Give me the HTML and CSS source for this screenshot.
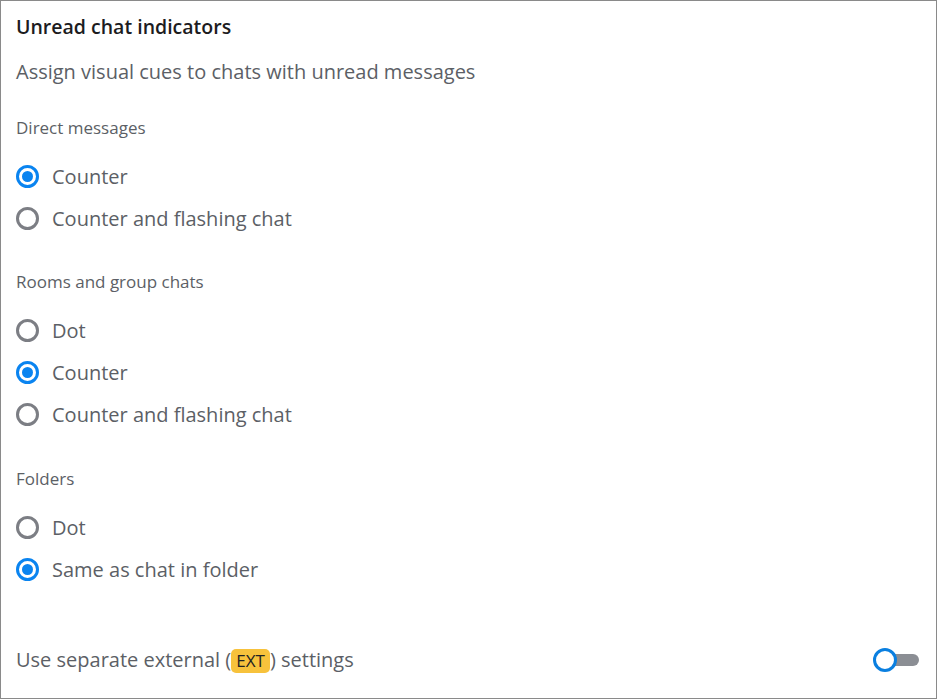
FILE: index.html
```html
<!DOCTYPE html>
<html>
<head>
<meta charset="utf-8">
<link rel="stylesheet" href="styles.css">
</head>
<body>
<div class="panel">
  <h1 class="title">Unread chat indicators</h1>
  <p class="subtitle">Assign visual cues to chats with unread messages</p>

  <div class="group">
    <div class="group-label">Direct messages</div>
    <div class="option"><span class="radio checked"></span><span>Counter</span></div>
    <div class="option"><span class="radio"></span><span>Counter and flashing chat</span></div>
  </div>

  <div class="group">
    <div class="group-label">Rooms and group chats</div>
    <div class="option"><span class="radio"></span><span>Dot</span></div>
    <div class="option"><span class="radio checked"></span><span>Counter</span></div>
    <div class="option"><span class="radio"></span><span>Counter and flashing chat</span></div>
  </div>

  <div class="group">
    <div class="group-label">Folders</div>
    <div class="option"><span class="radio"></span><span>Dot</span></div>
    <div class="option"><span class="radio checked"></span><span>Same as chat in folder</span></div>
  </div>

  <div class="setting">
    <span>Use separate external (<span class="badge">EXT</span>) settings</span>
    <span class="toggle"><span class="track"></span><span class="knob"></span></span>
  </div>
</div>
</body>
</html>
```

FILE: styles.css
```css
* { box-sizing: border-box; }
html, body { margin: 0; padding: 0; background: #fff; }
body { font-family: "Open Sans", "Noto Sans", sans-serif; color: #5c5f66; }
.panel {
  width: 937px;
  height: 699px;
  border: 1px solid #8a8a8a;
  padding: 13px 15px 0 15px;
  display: flex;
  flex-direction: column;
}
.title {
  margin: 0;
  font-size: 19.5px;
  font-weight: 600;
  color: #1c1c1e;
  line-height: 26px;
}
.subtitle {
  margin: 19px 0 0 0;
  font-size: 20px;
  line-height: 26px;
  color: #5c5f66;
}
.group { margin-top: 32px; display: flex; flex-direction: column; }
.group + .group { margin-top: 32px; }
.group + .group + .group { margin-top: 33px; }
.group-label {
  font-size: 17px;
  line-height: 22px;
  color: #5c5f66;
  margin-bottom: 16px;
}
.option {
  display: flex;
  align-items: center;
  gap: 13px;
  height: 42px;
  font-size: 20px;
  color: #5c5f66;
}
.radio {
  width: 23px;
  height: 23px;
  border-radius: 50%;
  border: 3px solid #7c7e84;
  flex: none;
  display: flex;
  align-items: center;
  justify-content: center;
}
.radio.checked { border-color: #0a84f0; }
.radio.checked::after {
  content: "";
  width: 11px;
  height: 11px;
  border-radius: 50%;
  background: #0a84f0;
}
.setting {
  margin-top: auto;
  margin-bottom: 25px;
  display: flex;
  align-items: center;
  justify-content: space-between;
  font-size: 20px;
  line-height: 26px;
  color: #5c5f66;
  padding-right: 2px;
}
.badge {
  display: inline-block;
  background: #f7c23c;
  color: #222222;
  border-radius: 5px;
  padding: 0 5px;
  font-size: 17px;
  line-height: 24px;
  font-weight: 500;
  vertical-align: 0;
}
.toggle {
  position: relative;
  width: 46px;
  height: 24px;
  display: inline-block;
}
.track {
  position: absolute;
  left: 12px;
  right: 0;
  top: 6px;
  height: 12px;
  border-radius: 6px;
  background: #8b8e94;
}
.knob {
  position: absolute;
  left: 0;
  top: 0;
  width: 24px;
  height: 24px;
  border-radius: 50%;
  border: 3px solid #0a7fe0;
  background: #fff;
}
```
